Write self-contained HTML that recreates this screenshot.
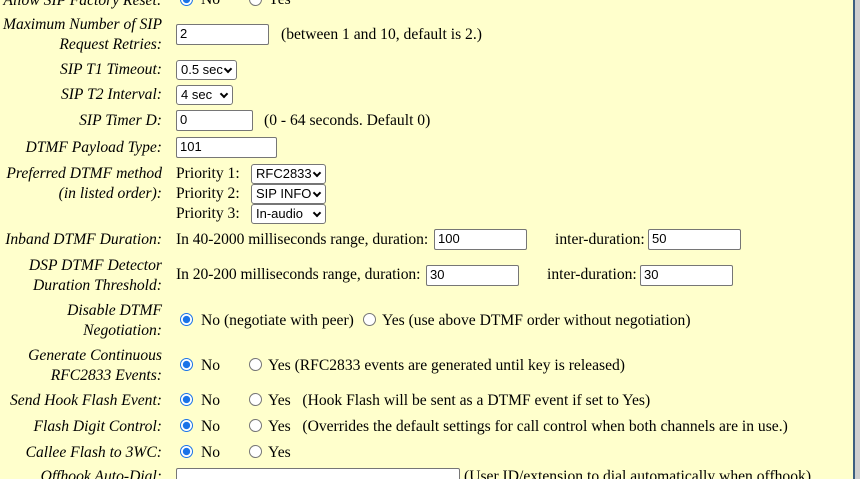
<!DOCTYPE html>
<html><head><meta charset="utf-8"><style>
html,body{margin:0;padding:0;width:860px;height:479px;overflow:hidden;background:#ffffcc;font-family:"Liberation Serif",serif;font-size:15.6px;color:#000}
#w{position:relative;width:860px;height:479px;overflow:hidden}
.t{position:absolute;white-space:nowrap;line-height:18px}
.l{position:absolute;right:698px;text-align:right;font-style:italic;white-space:nowrap;line-height:20px}
.in{position:absolute;height:19px;border:1px solid #767676;border-radius:2px;background:#fff;box-sizing:border-box;font-family:"Liberation Sans",sans-serif;font-size:13px;line-height:17px;padding-left:3px}
.sel{position:absolute;height:20px;border:1px solid #767676;border-radius:3px;background:#fff;box-sizing:border-box;font-family:"Liberation Sans",sans-serif;font-size:13px;line-height:18px;padding-left:4px}
.sel:after{content:"";position:absolute;right:5px;top:5px;width:4px;height:4px;border-right:2px solid #000;border-bottom:2px solid #000;transform:rotate(45deg)}
.r{position:absolute;width:13px;height:13px;border-radius:50%;box-sizing:border-box;border:1px solid #767676;background:#fff}
.r.c{border:1.5px solid #1a73e8;background:radial-gradient(circle,#1a73e8 0 3.4px,#fff 3.9px)}
.n{letter-spacing:-0.05px}
#bar{position:absolute;left:853px;top:0;width:2px;height:479px;background:#3d5f7f}
#sb{position:absolute;left:855px;top:0;width:5px;height:479px;background:#cfcfcf}
</style></head><body><div id="w">
<div class="l" style="top:-9px">Allow SIP Factory Reset:</div>
<div class="r c" style="left:180px;top:-7px"></div><div class="t" style="left:201px;top:-9px">No</div>
<div class="r" style="left:249px;top:-7px"></div><div class="t" style="left:268px;top:-9px">Yes</div>

<div class="l" style="top:15px">Maximum Number of SIP</div>
<div class="l" style="top:35px">Request Retries:</div>
<div class="in" style="left:176px;top:24px;width:93px;height:21px">2</div>
<div class="t" style="left:281px;top:26px">(between 1 and 10, default is 2.)</div>

<div class="l" style="top:60px">SIP T1 Timeout:</div>
<div class="sel" style="left:176px;top:60px;width:61px">0.5 sec</div>
<div class="l" style="top:85px">SIP T2 Interval:</div>
<div class="sel" style="left:176px;top:85px;width:57px">4 sec</div>

<div class="l" style="top:111px">SIP Timer D:</div>
<div class="in" style="left:176px;top:110px;width:77px;height:21px">0</div>
<div class="t" style="left:264px;top:112px">(0 - 64 seconds. Default 0)</div>

<div class="l" style="top:138px">DTMF Payload Type:</div>
<div class="in" style="left:176px;top:137px;width:101px;height:21px">101</div>

<div class="l" style="top:164px">Preferred DTMF method</div>
<div class="l" style="top:184px">(in listed order):</div>
<div class="t" style="left:176px;top:165px">Priority 1:</div>
<div class="t" style="left:176px;top:185px">Priority 2:</div>
<div class="t" style="left:176px;top:205px">Priority 3:</div>
<div class="sel" style="left:251px;top:164px;width:75px">RFC2833</div>
<div class="sel" style="left:251px;top:184px;width:75px">SIP INFO</div>
<div class="sel" style="left:251px;top:204px;width:75px">In-audio</div>

<div class="l" style="top:230px">Inband DTMF Duration:</div>
<div class="t n" style="left:176px;top:231px">In 40-2000 milliseconds range, duration:</div>
<div class="in" style="left:434px;top:229px;width:93px;height:21px">100</div>
<div class="t" style="left:555px;top:231px">inter-duration:</div>
<div class="in" style="left:648px;top:229px;width:93px;height:21px">50</div>

<div class="l" style="top:256px">DSP DTMF Detector</div>
<div class="l" style="top:276px">Duration Threshold:</div>
<div class="t n" style="left:176px;top:266px">In 20-200 milliseconds range, duration:</div>
<div class="in" style="left:426px;top:265px;width:93px;height:21px">30</div>
<div class="t" style="left:547px;top:266px">inter-duration:</div>
<div class="in" style="left:640px;top:265px;width:93px;height:21px">30</div>

<div class="l" style="top:301px">Disable DTMF</div>
<div class="l" style="top:321px">Negotiation:</div>
<div class="r c" style="left:180px;top:313px"></div><div class="t" style="left:201px;top:312px">No (negotiate with peer)</div>
<div class="r" style="left:363px;top:313px"></div><div class="t" style="left:382px;top:312px">Yes (use above DTMF order without negotiation)</div>

<div class="l" style="top:346px">Generate Continuous</div>
<div class="l" style="top:366px">RFC2833 Events:</div>
<div class="r c" style="left:180px;top:358px"></div><div class="t" style="left:201px;top:357px">No</div>
<div class="r" style="left:249px;top:358px"></div><div class="t" style="left:268px;top:357px">Yes (RFC2833 events are generated until key is released)</div>

<div class="l" style="top:391px">Send Hook Flash Event:</div>
<div class="r c" style="left:180px;top:393px"></div><div class="t" style="left:201px;top:392px">No</div>
<div class="r" style="left:249px;top:393px"></div><div class="t" style="left:268px;top:392px">Yes&nbsp;&nbsp; (Hook Flash will be sent as a DTMF event if set to Yes)</div>

<div class="l" style="top:417px">Flash Digit Control:</div>
<div class="r c" style="left:180px;top:419px"></div><div class="t" style="left:201px;top:418px">No</div>
<div class="r" style="left:249px;top:419px"></div><div class="t" style="left:268px;top:418px">Yes&nbsp;&nbsp; (Overrides the default settings for call control when both channels are in use.)</div>

<div class="l" style="top:443px">Callee Flash to 3WC:</div>
<div class="r c" style="left:180px;top:445px"></div><div class="t" style="left:201px;top:444px">No</div>
<div class="r" style="left:249px;top:445px"></div><div class="t" style="left:268px;top:444px">Yes</div>

<div class="l" style="top:467px">Offhook Auto-Dial:</div>
<div class="in" style="left:176px;top:468px;width:284px;height:21px"></div>
<div class="t" style="left:464px;top:468px">(User ID/extension to dial automatically when offhook)</div>

<div id="bar"></div><div id="sb"></div>
</div></body></html>
